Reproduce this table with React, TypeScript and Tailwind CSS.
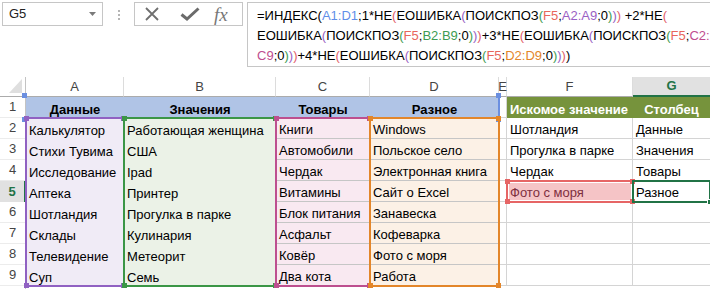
import type { ReactNode } from 'react';

const colA = ['Калькулятор', 'Стихи Тувима', 'Исследование', 'Аптека', 'Шотландия', 'Склады', 'Телевидение', 'Суп'];
const colB = ['Работающая женщина', 'США', 'Ipad', 'Принтер', 'Прогулка в парке', 'Кулинария', 'Метеорит', 'Семь'];
const colC = ['Книги', 'Автомобили', 'Чердак', 'Витамины', 'Блок питания', 'Асфальт', 'Ковёр', 'Два кота'];
const colD = ['Windows', 'Польское село', 'Электронная книга', 'Сайт о Excel', 'Занавеска', 'Кофеварка', 'Фото с моря', 'Работа'];
const colF = ['Шотландия', 'Прогулка в парке', 'Чердак', 'Фото с моря', '', '', '', ''];
const colG = ['Данные', 'Значения', 'Товары', 'Разное', '', '', '', ''];

const GRID = 'grid grid-cols-[26px_98px_152px_94px_129px_8px_126px_77px] grid-rows-[20px_repeat(10,21px)]';
const cellBase = 'flex items-end leading-[17px] whitespace-nowrap overflow-hidden';

// formula pieces: [text, colour]
const K = '#000';
const BLUE = '#5f8ee8';
const RED = '#e2606a';
const PURP = '#9a5fc4';
const GRN = '#3e9b52';
const MAG = '#c04d8f';
const ORG = '#e3862a';
const FRED = '#e8665c';

const line1: [string, string][] = [
  ['=ИНДЕКС(', K], ['A1:D1', BLUE], [';1*НЕ', K], ['(', RED], ['ЕОШИБКА', K], ['(', PURP], ['ПОИСКПОЗ', K], ['(', GRN],
  ['F5', FRED], [';', K], ['A2:A9', PURP], [';0', K], [')', GRN], [')', PURP], [')', RED], [' +2*НЕ', K], ['(', RED],
];
const line2: [string, string][] = [
  ['ЕОШИБКА', K], ['(', PURP], ['ПОИСКПОЗ', K], ['(', GRN], ['F5', FRED], [';', K], ['B2:B9', GRN], [';0', K],
  [')', GRN], [')', PURP], [')', RED], ['+3*НЕ', K], ['(', RED], ['ЕОШИБКА', K], ['(', PURP], ['ПОИСКПОЗ', K], ['(', GRN],
  ['F5', FRED], [';', K], ['C2:', MAG],
];
const line3: [string, string][] = [
  ['C9', MAG], [';0', K], [')', GRN], [')', PURP], [')', RED], ['+4*НЕ', K], ['(', RED], ['ЕОШИБКА', K], ['(', PURP],
  ['ПОИСКПОЗ', K], ['(', GRN], ['F5', FRED], [';', K], ['D2:D9', ORG], [';0', K], [')', GRN], [')', PURP], [')', RED], [')', K],
];

const FormulaLine = ({ parts }: { parts: [string, string][] }) => (
  <div className="h-[20px] whitespace-pre">
    {parts.map(([t, c], i) => (
      <span key={i} style={{ color: c }}>{t}</span>
    ))}
  </div>
);

const FormulaBar = () => (
  <div className="h-[77px] flex items-start pt-[2px]">
    <div className="ml-[2px] w-[101px] h-[24px] border border-[#c6c6c6] flex items-center justify-between pl-[6px] pr-[6px]">
      <span className="text-[#222]">G5</span>
      <svg width="7" height="4" viewBox="0 0 7 4">
        <path d="M0 0h7L3.5 4z" fill="#7a7a7a" />
      </svg>
    </div>
    <div className="ml-[15px] mt-[8px] flex flex-col gap-[2px]">
      <div className="w-[2px] h-[2px] bg-[#b5b5b5]" />
      <div className="w-[2px] h-[2px] bg-[#b5b5b5]" />
      <div className="w-[2px] h-[2px] bg-[#b5b5b5]" />
    </div>
    <div className="ml-[14px] w-[109px] h-[24px] border border-[#c6c6c6] flex items-center">
      <svg className="ml-[9px]" width="16" height="16" viewBox="0 0 16 16">
        <path d="M2 2L14 14M14 2L2 14" stroke="#6f6f6f" strokeWidth="1.8" />
      </svg>
      <svg className="ml-[20px]" width="20" height="14" viewBox="0 0 20 14">
        <path d="M1.5 7.5L7 12L18.5 1.5" stroke="#6b6b6b" strokeWidth="3" fill="none" />
      </svg>
      <span className="ml-[14px] font-['Liberation_Serif',serif] italic text-[19px] leading-none text-[#777]">fx</span>
    </div>
    <div className="ml-[4px] flex-1 h-[65px] border-y border-l border-[#c6c6c6] pl-[9px] pt-[3px] leading-[20px]">
      <FormulaLine parts={line1} />
      <FormulaLine parts={line2} />
      <FormulaLine parts={line3} />
    </div>
  </div>
);

const ColHead = ({ children, last }: { children: ReactNode; last?: boolean }) => (
  <div
    className={
      last
        ? 'flex items-center justify-center bg-[#e1e1e1] border-b-2 border-[#217346] text-[#217346] font-bold'
        : 'flex items-center justify-center border-r border-[#dcdcdc] border-b border-b-[#ababab] text-[#444]'
    }
  >
    {children}
  </div>
);

const RowHead = ({ n }: { n?: number }) => (
  <div
    className={
      n === 5
        ? 'flex items-center justify-center bg-[#e1e1e1] border-r-2 border-[#217346] text-[#217346] font-bold'
        : 'flex items-center justify-center border-r border-[#c3c3c3] border-b border-b-[#ececec] text-[#444]'
    }
  >
    {n}
  </div>
);

const Handle = ({ pos, color }: { pos: string; color: string }) => (
  <div className={`absolute w-[5px] h-[5px] ${pos}`} style={{ backgroundColor: color }} />
);

const Range = ({ place, color, className }: { place: string; color: string; className?: string }) => (
  <div className={`relative -m-px ${place} ${className ?? 'border-2'}`} style={{ borderColor: color }}>
    <Handle pos="-left-[3px] -top-[3px]" color={color} />
    <Handle pos="-right-[3px] -top-[3px]" color={color} />
    <Handle pos="-left-[3px] -bottom-[3px]" color={color} />
    <Handle pos="-right-[3px] -bottom-[3px]" color={color} />
  </div>
);

const Sheet = () => (
  <div className="relative">
    <div className={GRID}>
      {/* column headers */}
      <div className="relative border-r border-[#c3c3c3] border-b border-b-[#ababab]">
        <svg className="absolute right-[3px] bottom-[3px]" width="13" height="14" viewBox="0 0 13 14">
          <path d="M13 0V14H0z" fill="#dfdfdf" />
        </svg>
      </div>
      <ColHead>A</ColHead>
      <ColHead>B</ColHead>
      <ColHead>C</ColHead>
      <ColHead>D</ColHead>
      <ColHead>E</ColHead>
      <ColHead>F</ColHead>
      <ColHead last>G</ColHead>

      {/* row 1 */}
      <RowHead n={1} />
      <div className={`${cellBase} justify-center bg-[#b0c4e6] font-bold`}>Данные</div>
      <div className={`${cellBase} justify-center bg-[#b0c4e6] font-bold`}>Значения</div>
      <div className={`${cellBase} justify-center bg-[#b0c4e6] font-bold`}>Товары</div>
      <div className={`${cellBase} justify-center bg-[#b0c4e6] font-bold`}>Разное</div>
      <div className="border-r border-b border-[#d4d4d4]" />
      <div className={`${cellBase} pl-[3px] bg-[#76933c] text-white font-bold`}>Искомое значение</div>
      <div className={`${cellBase} justify-center bg-[#76933c] text-white font-bold`}>Столбец</div>

      {colA.map((a, i) => (
        <div key={i} className="contents">
          <RowHead n={i + 2} />
          <div className={`${cellBase} pl-[3px] bg-[#f0ebf6]`}>{a}</div>
          <div className={`${cellBase} pl-[3px] bg-[#ebf2e7]`}>{colB[i]}</div>
          <div className={`${cellBase} pl-[3px] bg-[#f9e9f1] border-b border-[#c6c6c6]`}>{colC[i]}</div>
          <div className={`${cellBase} pl-[3px] bg-[#fcf1e6] border-b border-[#c6c6c6]`}>{colD[i]}</div>
          <div className="border-r border-b border-[#d4d4d4]" />
          <div
            className={
              i === 3
                ? `${cellBase} pl-[3px] bg-[#f5c4c6] text-[#7e2f3e] border-r border-b border-[#d4d4d4]`
                : `${cellBase} pl-[3px] border-r border-b border-[#d4d4d4]`
            }
          >
            {colF[i]}
          </div>
          <div className={`${cellBase} pl-[3px] border-b border-[#d4d4d4]`}>{colG[i]}</div>
        </div>
      ))}

      {/* row 10, below the window edge */}
      <RowHead />
      <div className="col-span-7" />
    </div>

    {/* reference highlights and selection */}
    <div className={`absolute inset-0 pointer-events-none ${GRID}`}>
      <Range place="col-start-2 col-span-4 row-start-2" color="#6b8fe0" className="border-r-2" />
      <Range place="col-start-2 row-start-3 row-span-8" color="#9061c2" />
      <Range place="col-start-3 row-start-3 row-span-8" color="#3b9646" />
      <Range place="col-start-4 row-start-3 row-span-8" color="#bd4f8f" />
      <Range place="col-start-5 row-start-3 row-span-8" color="#e3862a" />
      <Range
        place="col-start-7 row-start-6 shadow-[inset_0_0_0_1px_white]"
        color="#e66565"
      />
      <div className="relative -m-px col-start-8 row-start-6 border-2 border-[#217346]">
        <div className="absolute -right-[4px] -bottom-[4px] w-[6px] h-[6px] bg-[#217346] border border-white" />
      </div>
    </div>
  </div>
);

export default function App() {
  return (
    <div className="w-[710px] h-[289px] overflow-hidden bg-white font-['Liberation_Sans',Arial,sans-serif] text-[13px] text-black">
      <FormulaBar />
      <Sheet />
    </div>
  );
}
